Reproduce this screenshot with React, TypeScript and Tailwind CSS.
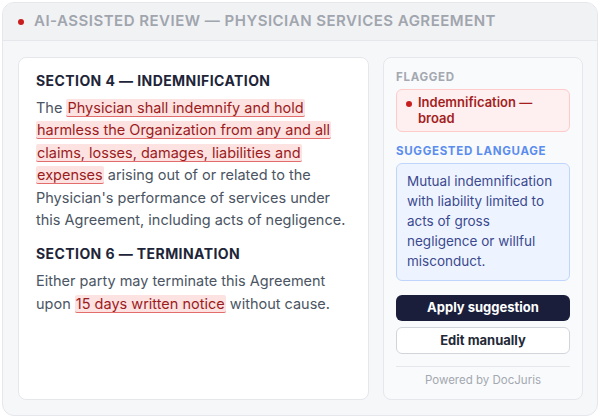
const Hl = ({ children }: { children: React.ReactNode }) => (
  <span className="bg-[#fde2e2] text-[#9b1c1c] border-b-[1.5px] border-[#e26d6d] px-[1px] rounded-[2px] [box-decoration-break:clone] [-webkit-box-decoration-break:clone]">
    {children}
  </span>
);

const App = () => {
  return (
    <div className="w-[600px] h-[418px] p-[2px] bg-white font-['Inter',sans-serif]">
      <div className="h-full rounded-xl border border-[#e5e7eb] bg-[#f6f7f9] overflow-hidden flex flex-col">
        <div className="h-[38px] shrink-0 flex items-center gap-[10px] px-[15px] bg-[#f1f2f4] border-b border-[#e5e7eb]">
          <span className="w-[6px] h-[6px] rounded-full bg-[#c81e1e]" />
          <span className="text-[15px] font-semibold tracking-[0.033em] text-[#a0a5ae]">
            AI-ASSISTED REVIEW — PHYSICIAN SERVICES AGREEMENT
          </span>
        </div>
        <div className="flex-1 flex gap-[14px] pt-[16px] pb-[15px] pl-[15px] pr-[14px]">
          <div className="flex-1 bg-white rounded-lg border border-[#e5e7eb] pt-[14px] px-[17px]">
            <div className="text-[14px] leading-[18px] font-bold tracking-[0.03em] text-[#1e2538] mb-[7px]">
              SECTION 4 — INDEMNIFICATION
            </div>
            <p className="text-[14.5px] leading-[22.4px] text-[#4b5563]">
              The{' '}
              <Hl>
                Physician shall indemnify and hold harmless the Organization from any and all
                claims, losses, damages, liabilities and expenses
              </Hl>{' '}
              arising out of or related to the Physician's performance of services under this
              Agreement, including acts of negligence.
            </p>
            <div className="mt-[14px] text-[14px] leading-[18px] font-bold tracking-[0.03em] text-[#1e2538] mb-[7px]">
              SECTION 6 — TERMINATION
            </div>
            <p className="text-[14.5px] leading-[22.4px] text-[#4b5563]">
              Either party may terminate this Agreement upon <Hl>15 days written notice</Hl> without
              cause.
            </p>
          </div>
          <div className="w-[200px] shrink-0 bg-[#f9fafb] rounded-lg border border-[#e5e7eb] pt-[12px] px-[12px] flex flex-col">
            <div className="text-[11.5px] leading-[14px] font-bold tracking-[0.06em] text-[#a3a8b1]">
              FLAGGED
            </div>
            <div className="mt-[5px] flex items-start gap-[6px] bg-[#fef0f0] border border-[#fecaca] rounded-md pl-[9px] pr-[8px] pt-[4px] pb-[5px]">
              <span className="mt-[7px] w-[6px] h-[6px] shrink-0 rounded-full bg-[#c81e1e]" />
              <span className="text-[13px] leading-[16px] font-semibold text-[#a41e1e]">
                Indemnification — broad
              </span>
            </div>
            <div className="mt-[12px] text-[11.5px] leading-[14px] font-bold tracking-[0.06em] text-[#5b8def]">
              SUGGESTED LANGUAGE
            </div>
            <div className="mt-[5px] bg-[#eef4ff] border border-[#bfd5fb] rounded-md pl-[10px] pr-[11px] pt-[7px] pb-[9px] text-[13.5px] leading-[20px] text-[#3b4a8f]">
              Mutual indemnification with liability limited to acts of gross negligence or willful
              misconduct.
            </div>
            <button className="mt-[14px] h-[26px] rounded-md bg-[#1a1e3b] text-white text-[13px] font-bold">
              Apply suggestion
            </button>
            <button className="mt-[6px] h-[27px] rounded-md bg-white border border-[#d1d5db] text-[#1f2937] text-[13px] font-bold">
              Edit manually
            </button>
            <div className="mt-[12px] border-t border-[#e5e7eb] pt-[6px] text-center text-[11.5px] leading-[14px] text-[#a3a8b1]">
              Powered by DocJuris
            </div>
          </div>
        </div>
      </div>
    </div>
  );
};

export default App;
